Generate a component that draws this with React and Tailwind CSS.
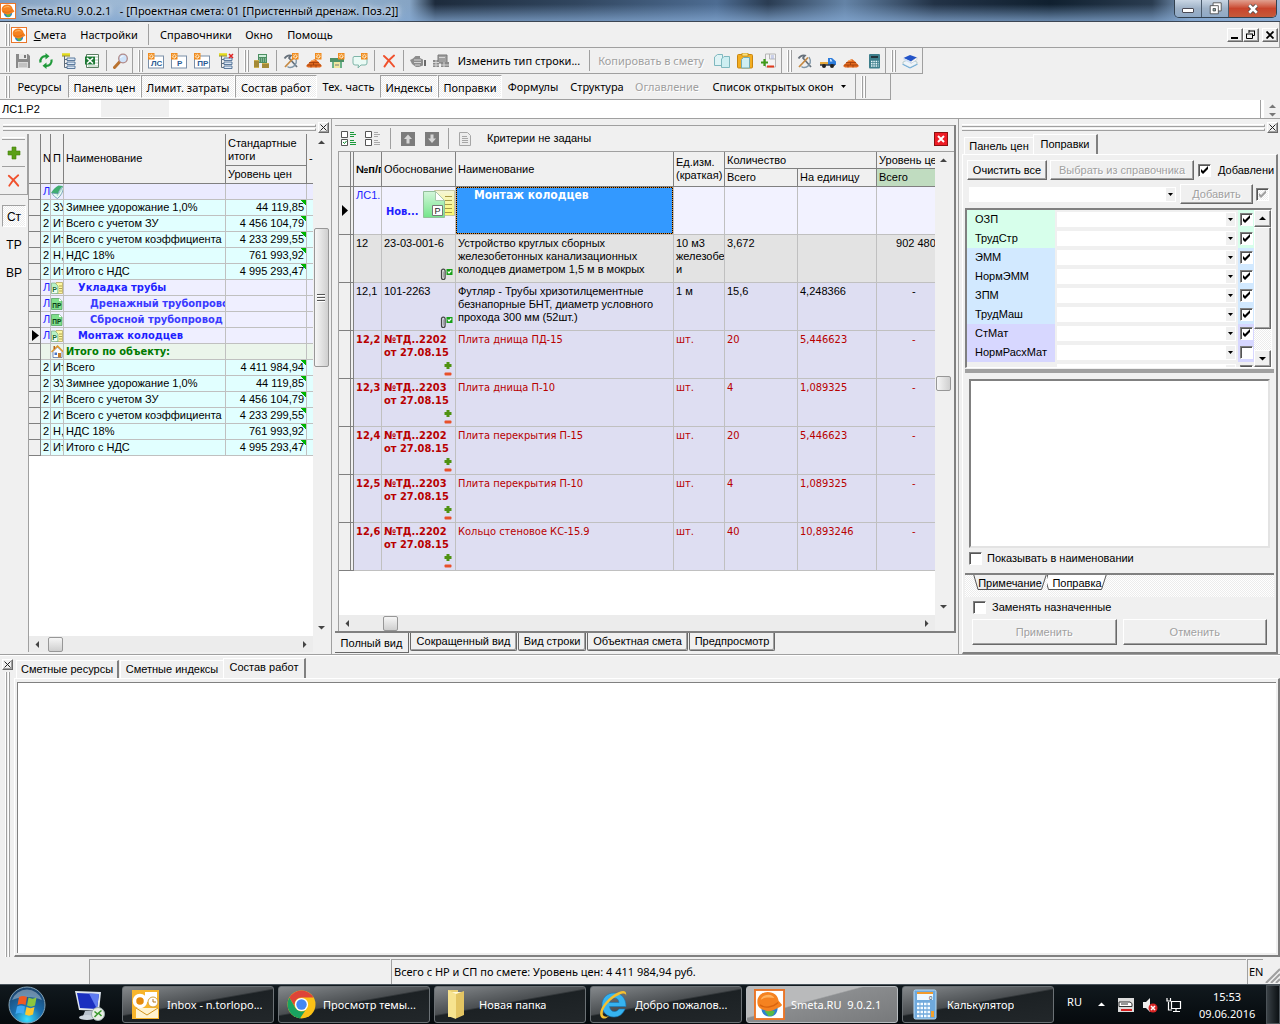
import React from "react";

const SANS = "font-['Liberation_Sans',Arial,sans-serif]";
const SEGOE = "font-['Noto_Sans','Open_Sans',sans-serif]";
const TAHOMA = "font-['DejaVu_Sans_Condensed','DejaVu_Sans',sans-serif]";

/* ---------- small drawings ---------- */

function Svg({ s = 16, vb = "0 0 16 16", className = "", children }) {
  return (
    <svg width={s} height={s} viewBox={vb} className={`shrink-0 ${className}`} fill="none" aria-hidden="true">
      {children}
    </svg>
  );
}

function Logo({ s = 16 }) {
  return (
    <Svg s={s}>
      <rect x=".5" y=".5" width="15" height="15" fill="#fff" stroke="#e9762a" />
      <path d="M3.800 9.500h8.400c0 3-1.700 4.700-4.200 4.700S3.800 12.500 3.800 9.500z" fill="#2b7fd0" />
      <path d="M5.500 11.500l2.500-.8 2.800.8-1 2.200-2.300.4z" fill="#57b947" />
      <path d="M1.800 7.500C1.300 4 3.800 1.600 7 1.500c3.500 0 5.300 2 5.700 4.500l1.800 2.300c-.8 1.200-2.300 1.500-3.500 2.200-1.500.8-3 1.300-4.800.7C4 10.700 2 9.700 1.800 7.500z" fill="#f58220" />
      <path d="M3.500 5.500c.6-1.700 2-2.500 4-2.500 1.500 0 2.500.7 3 1.700-2.300-.6-5-.5-7 .8z" fill="#ffb25e" />
      <path d="M3 8.200c2.500 1.800 6.500 1.500 9.500-1.200" stroke="#d9640f" strokeWidth=".7" />
    </Svg>
  );
}

function Gear({ x = 9, y = 0 }) {
  return (
    <g transform={`translate(${x} ${y})`}>
      <rect width="6.500" height="6.500" fill="#f08a1d" />
      <path d="M3.250 .8v5M.8 3.250h5M1.500 1.500l3.500 3.500M5 1.500L1.500 5" stroke="#fff3d6" strokeWidth=".9" />
      <circle cx="3.250" cy="3.250" r=".9" fill="#f08a1d" />
    </g>
  );
}

const Save = () => (
  <Svg>
    <path d="M1 1h12l2 2v12H1z" fill="#8a8a8a" />
    <path d="M4 1h8v5H4z" fill="#e8e8e8" />
    <path d="M9 2h2v3H9z" fill="#777" />
    <path d="M3 9h10v6H3z" fill="#d9d9d9" />
    <path d="M4 11h8M4 13h8" stroke="#aaa" />
  </Svg>
);
const Refresh = () => (
  <Svg>
    <path d="M2.500 9.500C1.800 5.500 4.500 3 8 3.200M13.500 6.500C14.200 10.500 11.500 13 8 12.800" stroke="#1f9a3a" strokeWidth="2.200" />
    <path d="M7.500 0v6.500l4-3.200zM8.500 16V9.500l-4 3.200z" fill="#1f9a3a" />
  </Svg>
);
const Tree = ({ x = false }) => (
  <Svg>
    <path d="M1 1.500h8" stroke="#e3db1b" strokeWidth="2.500" />
    <path d="M1 3h8" stroke="#8f8a1c" />
    <path d="M3.500 3v11.500M3.500 6.500H6M3.500 10.500H6M3.500 14.500H6" stroke="#5f6d7c" />
    <path d="M6 5h8v2.500H6zM6 9h8v2.500H6zM6 13h8v2.500H6z" fill="#dbe7f5" stroke="#4d6e94" strokeWidth=".9" />
    {x && <path d="M11 1l4 4M15 1l-4 4" stroke="#e02424" strokeWidth="1.500" />}
  </Svg>
);
const Excel = () => (
  <Svg>
    <path d="M2.500 1.500h12v13h-12z" fill="#fff" stroke="#5c7f63" />
    <path d="M11 4h3M11 7h3M11 10h3M4 13h10" stroke="#a9c7b0" />
    <path d="M1 3.500h10v8H1z" fill="#1d7a35" />
    <path d="M3 5l6 5.500M9 5l-6 5.500" stroke="#fff" strokeWidth="1.600" />
  </Svg>
);
const Magnifier = () => (
  <Svg>
    <path d="M1.500 14.500l5-5.500" stroke="#b9722f" strokeWidth="3" strokeLinecap="round" />
    <circle cx="10" cy="5.500" r="4.300" fill="#cfe3fa" stroke="#b08a8a" strokeWidth="1.300" />
    <path d="M7.500 5c.5-1.500 1.800-2 3-2" stroke="#fff" />
  </Svg>
);
const DocTag = ({ t }) => (
  <Svg>
    <rect x=".5" y="3" width="15" height="12" fill="#fff" stroke="#7b8fa8" />
    <text x="8.700" y="13.300" textAnchor="middle" fontSize="8" fontWeight="bold" fontFamily="Liberation Sans" fill="#2b5c94">
      {t}
    </text>
    <Gear x={0} y={0} />
  </Svg>
);
const Estimate = () => (
  <Svg>
    <path d="M4 1h9v9H4z" fill="#4d8f62" />
    <path d="M5 2h7v2H5z" fill="#cdeeda" />
    <path d="M5 6h7M5 8h7" stroke="#b7dcc4" strokeDasharray="1 1" />
    <path d="M0 7h5v8H0zM8 10h7v5H8z" fill="#cdb04e" />
    <path d="M0 9h5M0 11h5M0 13h5M8 12h7M8 14h7" stroke="#7c6520" />
  </Svg>
);
const Hammer = ({ gear }) => (
  <Svg>
    <path d="M1.500 5.500C3 3 5 2 8 2.500L6 5l8 9" stroke="#66707a" strokeWidth="1.700" />
    <path d="M12 4c2.500 4 1.500 8-2.500 10-2 .7-4 .3-5-.6" stroke="#7f96a8" strokeWidth="1.400" />
    <path d="M2 14L11 4.500" stroke="#c58a44" strokeWidth="1.800" />
    {gear && <Gear />}
  </Svg>
);
const Bricks = ({ gear }) => (
  <Svg>
    <path d="M0 13l2.500-2.500 3-3L9 6l3 2.500 4 4.500-2 1.500H2z" fill="#e2691e" />
    <path d="M1 12h14M3 9.500h10M5 12v2.500M10 12v2.500M7.500 9.500V12" stroke="#9c3c0b" strokeWidth=".8" />
    <path d="M5 8l4-1" stroke="#ffb36b" />
    {gear && <Gear />}
  </Svg>
);
const Printer = () => (
  <Svg>
    <path d="M1 5h14v4H1z" fill="#4e9167" />
    <path d="M3 9h10v6H3z" fill="#6bb287" />
    <path d="M5 9h6v6H5z" fill="#efe7a0" />
    <path d="M6 12h4" stroke="#777" />
    <Gear />
  </Svg>
);
const Bubble = () => (
  <Svg>
    <path d="M2 3.500h11q2 0 2 2V10q0 2-2 2h-4l-3 3 .5-3H3q-2 0-2-2V5.500q0-2 1-2z" fill="#eafaf5" stroke="#7fb5a8" />
    <Gear />
  </Svg>
);
const RedX = ({ s = 16 }) => (
  <Svg s={s}>
    <path d="M3 3c3 2.500 7 6.500 10 10.500M13 2.500C9 5.500 6 9 3.500 13.500" stroke="#f0512d" strokeWidth="2" strokeLinecap="round" />
  </Svg>
);
const GreyEngine = () => (
  <Svg>
    <path d="M0 7l3-1.500L5.500 3H10v2l3 1.500v6l-4 1.500H6l-4-3z" fill="#8d8d8d" />
    <path d="M4 7h7M4 9.500h7M5 12h5" stroke="#d5d5d5" />
    <path d="M14 7h2v6h-2z" fill="#6b6b6b" />
  </Svg>
);
const GreyBlocks = () => (
  <Svg>
    <path d="M5 2h9v8H5z" fill="#a0a0a0" stroke="#787878" />
    <path d="M0 7h6v7H0zM8 9h8v5H8z" fill="#8a8a8a" />
    <path d="M0 9.500h6M0 12h6M8 12h8M6 4.500h6M3 7v7M11 9v5" stroke="#d6d6d6" />
  </Svg>
);
const Copy = () => (
  <Svg>
    <path d="M.5 4l3-2.500h5v11h-8z" fill="#dff3f5" stroke="#7fb8bf" />
    <path d="M7.500 6l2.500-2.500h5.500V14.500h-8z" fill="#cdeef1" stroke="#7fb8bf" />
  </Svg>
);
const Paste = () => (
  <Svg>
    <rect x=".5" y="1.500" width="15" height="13.500" rx="1" fill="#f4ae22" stroke="#c98610" />
    <path d="M5 0h6v3H5z" fill="#ffe27d" stroke="#b58a1a" strokeWidth=".7" />
    <path d="M4.500 6.500l2-2h6V15h-8z" fill="#cfeef1" stroke="#71aab3" />
  </Svg>
);
const AddSub = () => (
  <Svg>
    <path d="M4.500 1h10v13h-10zM8.500 1v5h6" fill="#f4f4f4" stroke="#b5b5b5" />
    <path d="M10 3h3M10 5h3" stroke="#a5b0e0" />
    <path d="M3.500 6v7M0 9.500h7" stroke="#3f9a1b" strokeWidth="2.200" />
    <path d="M6 13.500h7" stroke="#e23a1c" strokeWidth="2" />
  </Svg>
);
const Truck = () => (
  <Svg>
    <path d="M0 9h9v3H0z" fill="#e7a93b" />
    <path d="M8 5h4l4 3.500V12H8z" fill="#2d7ddd" />
    <path d="M11 6l1.500 2.500H10V6z" fill="#cbe4ff" />
    <path d="M0 12h15" stroke="#2c3c55" strokeWidth="1.500" />
    <circle cx="4" cy="13" r="2" fill="#222" />
    <circle cx="12" cy="13" r="2" fill="#222" />
  </Svg>
);
const Calc = () => (
  <Svg>
    <rect x="3" y="1" width="11" height="14.500" rx="1" fill="#3e7f8c" />
    <path d="M5 3h7v2H5z" fill="#22343c" />
    <path d="M5 8.500h7.500M5 10.800h7.500M5 13h7.500" stroke="#e8f8fb" strokeWidth="1.400" strokeDasharray="1.500 .8" />
  </Svg>
);
const Book = () => (
  <Svg>
    <path d="M0 11.500l8-3 8 3-8 4z" fill="#5ca7e8" />
    <path d="M1 9l7-3 7 3v2l-7 3.500-7-3.500z" fill="#eef4fa" stroke="#8aa" strokeWidth=".5" />
    <path d="M1.500 5L8 2l7 2.500L9 8.500z" fill="#2454c8" />
    <path d="M1.500 5v2L9 10.500v-2z" fill="#cfe0f5" />
    <path d="M9 8.500l6-4v2l-6 4z" fill="#fff" stroke="#9ab" strokeWidth=".4" />
  </Svg>
);
const Plus = ({ s = 14 }) => (
  <Svg s={s} vb="0 0 14 14">
    <path d="M5 1h4v4h4v4H9v4H5V9H1V5h4z" fill="#5b9f17" stroke="#43820c" strokeWidth=".6" />
  </Svg>
);
const PlusMinus = () => (
  <svg width="8" height="16" viewBox="0 0 8 16" aria-hidden="true">
    <path d="M2.500 1h3v2h2v3h-2v2h-3V6h-2V3h2z" fill="#4f9212" />
    <rect x=".5" y="11.500" width="7" height="3" rx="1" fill="#e8502a" />
  </svg>
);
const Clip = () => (
  <svg width="13" height="14" viewBox="0 0 13 14" aria-hidden="true" fill="none">
    <path d="M1.500 3v7.500q0 2 1.800 2t1.800-2V4q0-1.800-1.800-1.800T1.500 4" stroke="#444" strokeWidth="1.200" />
    <path d="M3.300 4.500v6" stroke="#999" />
    <path d="M6.500 2h6v6h-6z" fill="#17a017" />
    <path d="M7.800 4.500L9 6l2.300-2.500" stroke="#fff" strokeWidth="1.200" />
  </svg>
);
const SmallR = () => (
  <Svg s={12} vb="0 0 12 12">
    <path d="M5 .5h6.500v11H5z" fill="#fdf7a2" stroke="#b8a860" strokeWidth=".8" />
    <path d="M8 4h3M8 6.500h3M8 9h3" stroke="#9c8d3e" strokeWidth=".8" />
    <path d="M.5 1H4l3 3v7.500H.5z" fill="#b9f2c5" stroke="#7daa84" strokeWidth=".7" />
    <path d="M1 5h5v6H1z" fill="#eefdf1" />
    <text x="3.500" y="10.300" fontSize="7" fontWeight="bold" textAnchor="middle" fontFamily="Liberation Sans" fill="#17662b">P</text>
  </Svg>
);
const SmallPR = () => (
  <Svg s={12} vb="0 0 12 12">
    <path d="M.5 .5H8L11 3v8.500H.5z" fill="#7fe08b" stroke="#4a9a58" strokeWidth=".7" />
    <path d="M8 .5V3h3z" fill="#fff" />
    <text x="5.800" y="9.800" fontSize="6.500" fontWeight="bold" textAnchor="middle" fontFamily="Liberation Sans" fill="#0b3d16">ПР</text>
  </Svg>
);
const House = () => (
  <Svg s={13} vb="0 0 13 13">
    <path d="M2 6.500L6.500 2 11 6.500V12.500H2z" fill="#fff" stroke="#5a72a8" strokeWidth=".8" />
    <path d="M.5 7L6.500 1l6 6" stroke="#e39a2d" strokeWidth="1.500" />
    <path d="M7 8h3v4.500H7z" fill="#c77d2a" />
    <path d="M3.500 7.500H6v2.500H3.500z" fill="#4a76c8" />
    <path d="M2.500 1h1.500v3H2.500z" fill="#b5651d" />
  </Svg>
);
const Sheet = () => (
  <svg width="13" height="14" viewBox="0 0 13 14" fill="none" aria-hidden="true">
    <path d="M0 8C2 5 4 2 7.500 .5L12.500 1C9 3 8 6 7 9z" fill="#3fae70" />
    <path d="M1 8l6 1c1-3 3-6 5.500-7.500C12.500 6 10 11 6.500 13.500 4.500 12.500 2 10.500 1 8z" fill="#e9fbf2" stroke="#5f93a8" strokeWidth=".8" />
    <path d="M6 11l5-7" stroke="#9cc" strokeWidth=".8" />
  </svg>
);
const BigR = () => (
  <svg width="32" height="30" viewBox="0 0 32 30" aria-hidden="true" fill="none">
    <defs>
      <linearGradient id="bigGreen" x1="0" y1="0" x2="0" y2="1">
        <stop offset="0" stopColor="#d3f6da" />
        <stop offset="1" stopColor="#74e58b" />
      </linearGradient>
      <linearGradient id="bigYellow" x1="0" y1="0" x2="0" y2="1">
        <stop offset="0" stopColor="#f4f6d8" />
        <stop offset="1" stopColor="#fbf76b" />
      </linearGradient>
    </defs>
    <path d="M11.500 1.500h20v25h-20z" fill="url(#bigYellow)" stroke="#c9c9a0" />
    <path d="M22 7.500h7M22 11.500h7M22 15.500h7M22 19.500h7M22 23.500h7" stroke="#a89a45" />
    <path d="M.5 2.500h12l9 9V28.500H.5z" fill="url(#bigGreen)" stroke="#93bf9b" />
    <path d="M12.500 2.500v9h9z" fill="#fff" stroke="#a9c9ad" />
    <path d="M9.500 16.500h10v10h-10z" fill="#fff" stroke="#777" />
    <text x="14.500" y="25" fontSize="9" textAnchor="middle" fontFamily="Liberation Sans" fill="#222">P</text>
  </svg>
);
const CheckList = ({ on }) => (
  <Svg>
    <path d="M.5 .5h6v6h-6zM.5 8.500h6v6h-6z" fill="#fff" stroke="#555" />
    {on && <path d="M2 11l1.500 1.500 2-2.500" stroke="#0a8a2a" />}
    <path d="M9 1.500h4M9 3.500h6M9 5.500h4M9 9.500h4M9 11.500h6M9 13.500h6" stroke={on ? "#1a9a3a" : "#aaa"} />
  </Svg>
);
const ArrowBox = ({ down }) => (
  <Svg>
    <rect x="1" y="1" width="14" height="14" fill="#7c7c7c" />
    <path d={down ? "M6.500 3.500h3v4H12L8 12 4 7.500h2.500z" : "M8 3.500L12 8H9.500v4.500h-3V8H4z"} fill="#d6d6d6" />
  </Svg>
);
const GreyDoc = () => (
  <Svg>
    <path d="M2.500 1.500h8l3 3v10h-11z" fill="#ececec" stroke="#a6a6a6" />
    <path d="M5 5.500h5M5 7.500h6M5 9.500h6M5 11.500h6" stroke="#a6a6a6" />
  </Svg>
);
const Tri = ({ d = "down", c = "#444" }) => (
  <svg width="7" height="7" viewBox="0 0 7 7" className="shrink-0" aria-hidden="true">
    <path
      d={{ up: "M0 5h7L3.500 1.500z", down: "M0 2h7L3.500 5.500z", left: "M5 0v7L1.500 3.500z", right: "M2 0v7l3.500-3.500z" }[d]}
      fill={c}
    />
  </svg>
);

/* ---------- controls ---------- */

const RAISED = "border border-t-white border-l-white border-r-[#696969] border-b-[#696969] shadow-[inset_-1px_-1px_0_#a0a0a0]";
const DITHER = "bg-[repeating-conic-gradient(#ffffff_0_25%,#ececec_0_50%)] bg-[length:2px_2px]";

const Grip = () => (
  <span className="mr-px flex h-[22px] w-[5px] shrink-0 self-center gap-px">
    <span className="w-[2px] border-r border-r-[#a0a0a0] border-l border-l-white" />
    <span className="w-[2px] border-r border-r-[#a0a0a0] border-l border-l-white" />
  </span>
);
const Sep = () => <span className="mr-[2px] ml-[3px] h-[21px] w-px shrink-0 self-center bg-[#a0a0a0]" />;
const IconBtn = ({ label, children, w = "w-[23px]" }) => (
  <button aria-label={label} className={`flex h-full ${w} shrink-0 items-center justify-center`}>
    {children}
  </button>
);
const BarGroup = ({ children }) => (
  <div className="flex h-full shrink-0 items-center border-r border-b border-[#a0a0a0] pl-[5px]">{children}</div>
);
const TextBtn = ({ w, on, off, children }) => (
  <button
    disabled={off}
    className={`flex h-[23px] shrink-0 items-center justify-center whitespace-nowrap ${w} ${
      on ? `border border-t-[#a0a0a0] border-r-white border-b-white border-l-[#a0a0a0] pt-px ${DITHER}` : ""
    } ${off ? "text-[#a0a0a0] [text-shadow:1px_1px_0_#fff]" : ""}`}
  >
    {children}
  </button>
);

function CloseX({ label }) {
  return (
    <button aria-label={label} className={`flex size-[11px] shrink-0 items-center justify-center ${RAISED}`}>
      <svg width="7" height="7" viewBox="0 0 7 7" aria-hidden="true">
        <path d="M.5 .5l6 6M6.500 .5l-6 6" stroke="#222" />
      </svg>
    </button>
  );
}

function Tick({ id, on, off, label }) {
  return (
    <span className="relative inline-flex size-[13px] shrink-0">
      <input
        id={id}
        type="checkbox"
        aria-label={label}
        defaultChecked={on}
        disabled={off}
        className={`peer size-[13px] appearance-none border border-t-[#808080] border-r-white border-b-white border-l-[#808080] shadow-[inset_1px_1px_0_#555] ${
          off ? DITHER : "bg-white"
        }`}
      />
      <svg width="13" height="13" viewBox="0 0 13 13" className="pointer-events-none absolute inset-0 hidden peer-checked:block" aria-hidden="true">
        <path d="M3 5v3l2 2 5-5V2L5 7z" fill={off ? "#a0a0a0" : "#000"} />
      </svg>
    </span>
  );
}

function PushBtn({ off, className = "", children }) {
  return (
    <button
      disabled={off}
      className={`flex items-center justify-center whitespace-nowrap ${RAISED} ${off ? "text-[#a0a0a0] [text-shadow:1px_1px_0_#fff]" : ""} ${className}`}
    >
      {children}
    </button>
  );
}

function Combo({ label, className = "" }) {
  return (
    <span className={`relative flex bg-white ${className}`}>
      <select aria-label={label} className="w-full appearance-none bg-transparent outline-none" />
      <span className="pointer-events-none absolute top-px right-px bottom-px flex w-[9px] items-center justify-center bg-[#f0f0f0]">
        <svg width="5" height="3" viewBox="0 0 5 3" aria-hidden="true">
          <path d="M0 0h5L2.500 3z" fill="#000" />
        </svg>
      </span>
    </span>
  );
}

/* Vertical scroll track; the thumb is placed by the share of the track above and below it. */
function VScroll({ before, thumb, after, grip }) {
  return (
    <div className="flex w-[16px] shrink-0 flex-col items-center bg-[#f0f0f0]">
      <span className="flex h-[17px] items-center"><Tri d="up" /></span>
      <span style={{ flexGrow: before }} />
      <span
        style={{ height: thumb }}
        className="flex w-[15px] flex-col items-center justify-center gap-px rounded-[2px] border border-[#979797] bg-linear-to-r from-[#f6f6f6] to-[#cfcfcf]"
      >
        {grip && [0, 1, 2].map((i) => <span key={i} className="h-[2px] w-[8px] border-t border-[#555] bg-white" />)}
      </span>
      <span style={{ flexGrow: after }} />
      <span className="flex h-[17px] items-center"><Tri /></span>
    </div>
  );
}
function HScroll({ gap }) {
  return (
    <div className="flex h-[16px] shrink-0 items-center bg-[#ececec]">
      <span className="flex w-[17px] justify-center"><Tri d="left" /></span>
      <span className={gap} />
      <span className="h-[15px] w-[15px] rounded-[2px] border border-[#979797] bg-linear-to-b from-[#f6f6f6] to-[#cfcfcf]" />
      <span className="flex-1" />
      <span className="flex w-[17px] justify-center"><Tri d="right" /></span>
    </div>
  );
}

/* ---------- window chrome ---------- */

function TitleBar() {
  return (
    <header
      className={`flex h-[22px] shrink-0 items-center border-b border-[#3c4654] bg-[linear-gradient(to_bottom,transparent_20%,rgba(132,168,210,.75)),linear-gradient(to_right,#7f9cbd,#9db8d4_8%,#8eacc9_28%,#86a4c4_32%,#1d2b3c_34%,#31465f_45%,#4d6c92_56%,#2a3c52_60%,#6483a6_66%,#223246_73%,#10202f_82%,#2a3c50_90%,#86a5c9_93%,#9bb9da)] ${SEGOE} text-[11px] text-black`}
    >
      <Logo />
      <span className="ml-[5px] whitespace-pre [text-shadow:0_0_5px_#fff,0_0_8px_#fff]">
        {"Smeta.RU  9.0.2.1   - [Проектная смета: 01 [Пристенный дренаж. Поз.2]]"}
      </span>
      <div className="mr-[3px] ml-auto flex h-[18px] self-start overflow-hidden rounded-b-[5px] border border-t-0 border-[#33414f]">
        <button aria-label="Свернуть" className="flex w-[27px] items-center justify-center border-r border-[#4a5a6b] bg-linear-to-b from-[#c9d6e4] via-[#9eb1c6] to-[#8fa9c6]">
          <span className="mt-[3px] h-[5px] w-[12px] rounded-[1px] border border-[#4a4a55] bg-white" />
        </button>
        <button aria-label="Восстановить" className="flex w-[27px] items-center justify-center border-r border-[#4a5a6b] bg-linear-to-b from-[#c9d6e4] via-[#9eb1c6] to-[#8fa9c6]">
          <Svg s={13}>
            <path d="M5 1h10v10H5z" fill="#fff" stroke="#444" />
            <path d="M1.500 4.500h10v10h-10z" fill="#fff" stroke="#444" />
            <path d="M5 8h3v3H5z" fill="#8aa" stroke="#444" />
          </Svg>
        </button>
        <button aria-label="Закрыть" className="flex w-[47px] items-center justify-center bg-linear-to-b from-[#e0a090] via-[#c8442c] to-[#c65a3a]">
          <Svg s={12}>
            <path d="M3 3l10 10M13 3L3 13" stroke="#444" strokeWidth="5.500" />
            <path d="M3 3l10 10M13 3L3 13" stroke="#fff" strokeWidth="3.500" />
          </Svg>
        </button>
      </div>
    </header>
  );
}

function MenuBar() {
  return (
    <nav className={`flex h-[26px] shrink-0 items-center border-r border-b border-[#a0a0a0] pl-[5px] ${SEGOE} text-[11px]`}>
      <Grip />
      <Logo />
      <button className="w-[46px] text-center"><u>С</u>мета</button>
      <button className="w-[72px] text-center">Настройки</button>
      <Sep />
      <button className="w-[90px] text-center">Справочники</button>
      <button className="w-[36px] text-center">Окно</button>
      <button className="w-[66px] text-center">Помощь</button>
      <div className="mr-[1px] ml-auto flex">
        <button aria-label="Свернуть документ" className={`flex h-[14px] w-[16px] items-end pb-[2px] pl-[3px] ${RAISED}`}>
          <span className="h-[2px] w-[7px] bg-black" />
        </button>
        <button aria-label="Восстановить документ" className={`flex h-[14px] w-[16px] items-center justify-center ${RAISED}`}>
          <svg width="10" height="9" viewBox="0 0 10 9" fill="none" aria-hidden="true">
            <path d="M3 1h6M3 0v3M8.500 1v4.500H7M.500 4v4.500h6V4M0 4h7" stroke="#000" />
          </svg>
        </button>
        <button aria-label="Закрыть документ" className={`ml-[3px] flex h-[14px] w-[16px] items-center justify-center ${RAISED}`}>
          <svg width="8" height="8" viewBox="0 0 8 8" aria-hidden="true">
            <path d="M.5 .5l7 7M7.500 .5l-7 7" stroke="#000" strokeWidth="1.800" />
          </svg>
        </button>
      </div>
    </nav>
  );
}

function IconToolbar() {
  return (
    <div className={`flex h-[26px] shrink-0 ${SEGOE} text-[11px]`}>
      <BarGroup>
        <Grip />
        <IconBtn label="Сохранить"><Save /></IconBtn>
        <IconBtn label="Обновить"><Refresh /></IconBtn>
        <IconBtn label="Дерево"><Tree /></IconBtn>
        <IconBtn label="Excel"><Excel /></IconBtn>
        <Sep />
        <IconBtn label="Поиск"><Magnifier /></IconBtn>
      </BarGroup>
      <BarGroup>
        <Grip />
        <IconBtn label="Новая локальная смета"><DocTag t="ЛС" /></IconBtn>
        <IconBtn label="Новый раздел"><DocTag t="Р" /></IconBtn>
        <IconBtn label="Новый подраздел"><DocTag t="ПР" /></IconBtn>
        <IconBtn label="Удалить узел" w="w-[25px]"><Tree x /></IconBtn>
      </BarGroup>
      <BarGroup>
        <Grip />
        <IconBtn label="Расчёт"><Estimate /></IconBtn>
        <Sep />
        <IconBtn label="Новая расценка"><Hammer gear /></IconBtn>
        <IconBtn label="Новый материал"><Bricks gear /></IconBtn>
        <IconBtn label="Новое оборудование"><Printer /></IconBtn>
        <IconBtn label="Комментарий"><Bubble /></IconBtn>
        <Sep />
        <IconBtn label="Удалить"><RedX /></IconBtn>
        <Sep />
        <IconBtn label="Машина"><GreyEngine /></IconBtn>
        <IconBtn label="Оборудование"><GreyBlocks /></IconBtn>
        <TextBtn w="w-[134px]">Изменить тип строки...</TextBtn>
        <Sep />
        <TextBtn w="w-[118px]" off>Копировать в смету</TextBtn>
        <IconBtn label="Копировать"><Copy /></IconBtn>
        <IconBtn label="Вставить"><Paste /></IconBtn>
        <IconBtn label="Добавить или убрать" w="w-[25px]"><AddSub /></IconBtn>
      </BarGroup>
      <BarGroup>
        <Grip />
        <IconBtn label="Работы"><Hammer /></IconBtn>
        <IconBtn label="Перевозка"><Truck /></IconBtn>
        <IconBtn label="Материалы"><Bricks /></IconBtn>
        <IconBtn label="Калькулятор"><Calc /></IconBtn>
      </BarGroup>
      <BarGroup>
        <Grip />
        <IconBtn label="Книги" w="w-[25px]"><Book /></IconBtn>
      </BarGroup>
    </div>
  );
}

function TextToolbar() {
  return (
    <div className={`flex h-[26px] shrink-0 ${SEGOE} text-[11px]`}>
      <BarGroup>
        <Grip />
        <TextBtn w="w-[57px]">Ресурсы</TextBtn>
        <TextBtn w="w-[73px]" on>Панель цен</TextBtn>
        <TextBtn w="w-[94px]" on>Лимит. затраты</TextBtn>
        <TextBtn w="w-[82px]" on>Состав работ</TextBtn>
        <TextBtn w="w-[63px]">Тех. часть</TextBtn>
        <TextBtn w="w-[58px]" on>Индексы</TextBtn>
        <TextBtn w="w-[64px]" on>Поправки</TextBtn>
        <TextBtn w="w-[62px]">Формулы</TextBtn>
        <TextBtn w="w-[66px]">Структура</TextBtn>
        <TextBtn w="w-[74px]" off>Оглавление</TextBtn>
        <TextBtn w="w-[151px]">
          <span className="mr-[8px]">Список открытых окон</span>
          <svg width="5" height="3" viewBox="0 0 5 3" aria-hidden="true"><path d="M0 0h5L2.500 3z" fill="#000" /></svg>
        </TextBtn>
      </BarGroup>
      <BarGroup>
        <Grip />
        <span className="w-[23px]" />
      </BarGroup>
    </div>
  );
}

/* ---------- left panel ---------- */

const totals = [
  ["ЗУ", "Зимнее удорожание 1,0%", "44 119,85"],
  ["Ит", "Всего с учетом ЗУ", "4 456 104,79"],
  ["Ит", "Всего с учетом коэффициента", "4 233 299,55"],
  ["Н,", "НДС 18%", "761 993,92"],
  ["Ит", "Итого с НДС", "4 995 293,47"],
];
const treeRows = [
  { k: "top", icon: <Sheet /> },
  ...totals.map((t) => ({ k: "sum", t })),
  { k: "node", icon: <SmallR />, name: "Укладка трубы", pad: "pl-[14px]", c: "text-[#1f1fff]" },
  { k: "node", icon: <SmallPR />, name: "Дренажный трубопровод", pad: "pl-[26px]", c: "text-[#3a3aff]" },
  { k: "node", icon: <SmallPR />, name: "Сбросной трубопровод", pad: "pl-[26px]", c: "text-[#3a3aff]" },
  { k: "node", icon: <SmallR />, name: "Монтаж колодцев", pad: "pl-[14px]", c: "text-[#1f1fff]", cur: true },
  { k: "obj", icon: <House />, name: "Итого по объекту:", pad: "pl-[2px]", c: "text-[#007a00]" },
  { k: "sum", t: ["Ит", "Всего", "4 411 984,94"] },
  ...totals.map((t) => ({ k: "sum", t })),
];
const ROW_BG = { top: "bg-[#ebebff]", sum: "bg-[#e1ffff]", node: "bg-[#efefff]", obj: "bg-[#ebf5eb]" };

const TH = "border-r border-b border-[#808080] p-0 pl-[2px] text-left align-middle overflow-hidden";

function TreeTable() {
  const th = `${TH} bg-[#f0f0f0] font-normal whitespace-nowrap`;
  const td = "h-[16px] border-r border-b p-0 overflow-hidden whitespace-nowrap leading-[15px]";
  const line = "border-[#c0c0c0]";
  return (
    <table className="w-full table-fixed border-separate border-spacing-0">
      <colgroup>
        <col className="w-[12px]" />
        <col className="w-[10px]" />
        <col className="w-[13px]" />
        <col className="w-[162px]" />
        <col className="w-[81px]" />
        <col />
      </colgroup>
      <thead>
        <tr className="h-[32px]">
          <th rowSpan={2} className={th} />
          <th rowSpan={2} className={th}>N</th>
          <th rowSpan={2} className={th}>П</th>
          <th rowSpan={2} className={th}>Наименование</th>
          <th className={`${TH} bg-[#f0f0f0] leading-[13px] font-normal`}>Стандартные итоги</th>
          <th rowSpan={2} className={`${th} border-r-0`}>-</th>
        </tr>
        <tr className="h-[18px]">
          <th className={th}>Уровень цен</th>
        </tr>
      </thead>
      <tbody>
        {treeRows.map((r, i) => (
          <tr key={i} className={ROW_BG[r.k]}>
            <td className={`${td} border-[#808080] bg-[#f0f0f0] pl-[2px]`}>
              {r.cur && (
                <svg width="7" height="11" viewBox="0 0 7 11" className="ml-[1px]" aria-hidden="true"><path d="M0 0v11l7-5.500z" fill="#000" /></svg>
              )}
            </td>
            <td className={`${td} ${line} pl-[2px] ${r.k === "sum" ? "" : "text-[#1f1fff]"}`}>{r.k === "sum" ? "2" : r.k === "obj" ? "" : "Л"}</td>
            <td className={`${td} ${line} ${r.icon ? "" : "pl-[2px]"}`}>{r.icon || r.t[0]}</td>
            {r.name ? (
              <td className={`${td} ${line} font-bold ${TAHOMA} ${r.pad} ${r.c}`}>{r.name}</td>
            ) : (
              <td className={`${td} ${line} pl-[2px]`}>{r.t ? r.t[1] : ""}</td>
            )}
            <td className={`${td} ${line} pr-[2px] text-right ${r.t ? "bg-[linear-gradient(225deg,#00b400_4px,transparent_4px)]" : ""}`}>
              {r.t ? r.t[2] : ""}
            </td>
            <td className={`${td} ${line} border-r-0`} />
          </tr>
        ))}
      </tbody>
    </table>
  );
}

function HGrip() {
  return (
    <span className="flex h-[8px] flex-1 flex-col gap-[1px]">
      <span className="h-[3px] border-t border-r border-b border-[#a0a0a0] border-t-white" />
      <span className="h-[3px] border-t border-r border-b border-[#a0a0a0] border-t-white" />
    </span>
  );
}

function LeftPanel() {
  return (
    <section className="flex w-[332px] shrink-0 flex-col border-r border-[#a0a0a0]">
      <div className="flex h-[15px] shrink-0 items-center gap-[2px] pt-[2px] pr-[2px] pl-[3px]">
        <HGrip />
        <CloseX label="Закрыть панель итогов" />
      </div>
      <div className="flex min-h-0 flex-1">
        <div className="flex w-[28px] shrink-0 flex-col items-center text-[12px]">
          <div className="flex w-full flex-col border-r border-b border-[#a0a0a0] px-[2px]">
            <span className="mt-[3px] h-[3px] border-t border-b border-t-white border-b-[#a0a0a0]" />
            <button aria-label="Добавить строку" className="flex h-[26px] items-center justify-center"><Plus /></button>
            <span className="h-px bg-[#a0a0a0]" />
            <button aria-label="Удалить строку" className="flex h-[27px] items-center justify-center"><RedX s={15} /></button>
          </div>
          <button className={`mt-[10px] h-[22px] w-[24px] border border-t-[#a0a0a0] border-r-white border-b-white border-l-[#a0a0a0] pt-[2px] ${DITHER}`}>Ст</button>
          <button className="mt-[6px] h-[24px]">ТР</button>
          <button className="mt-[4px] h-[24px]">ВР</button>
        </div>
        <div className="mb-[2px] flex min-w-0 flex-1 border-l border-[#a0a0a0]">
          <div className="flex w-[284px] flex-col bg-white">
            <div className="min-h-0 flex-1 overflow-hidden"><TreeTable /></div>
            <HScroll gap="w-[2px]" />
          </div>
          <div className="flex flex-1 pb-[16px]">
            <VScroll before={77} thumb={139} after={252} grip />
          </div>
        </div>
      </div>
    </section>
  );
}

/* ---------- centre panel ---------- */

const plates = [
  ["12,2", "2202", "Плита днища ПД-15", "20", "5,446623"],
  ["12,3", "2203", "Плита днища П-10", "4", "1,089325"],
  ["12,4", "2202", "Плита перекрытия П-15", "20", "5,446623"],
  ["12,5", "2203", "Плита перекрытия П-10", "4", "1,089325"],
  ["12,6", "2202", "Кольцо стеновое КС-15.9", "40", "10,893246"],
];

function EstimateTable() {
  const th = `${TH} bg-[#f0f0f0] font-normal whitespace-nowrap`;
  const base = "h-[48px] border-b border-[#c0c0c0] p-0 pt-[2px] overflow-hidden align-top whitespace-nowrap";
  const td = `${base} border-r pl-[2px]`;
  const edge = "border-r border-b border-[#808080] bg-[#f0f0f0] p-0";
  return (
    <table className="w-full table-fixed border-separate border-spacing-0 leading-[13px]">
      <colgroup>
        <col className="w-[12px]" />
        <col className="w-[3px]" />
        <col className="w-[28px]" />
        <col className="w-[74px]" />
        <col className="w-[218px]" />
        <col className="w-[51px]" />
        <col className="w-[73px]" />
        <col className="w-[79px]" />
        <col />
      </colgroup>
      <thead>
        <tr className="h-[17px]">
          <th rowSpan={2} className={edge} />
          <th rowSpan={2} className={edge} />
          <th rowSpan={2} className={`${TH} bg-[#f0f0f0] font-bold whitespace-nowrap`}>№п/п</th>
          <th rowSpan={2} className={th}>Обоснование</th>
          <th rowSpan={2} className={th}>Наименование</th>
          <th rowSpan={2} className={th}>Ед.изм.<br />(краткая)</th>
          <th colSpan={2} className={th}>Количество</th>
          <th className={`${th} border-r-0`}>Уровень цен</th>
        </tr>
        <tr className="h-[18px]">
          <th className={th}>Всего</th>
          <th className={th}>На единицу</th>
          <th className={`${TH} border-r-0 bg-[#c0dcc0] font-normal`}>Всего</th>
        </tr>
      </thead>
      <tbody>
        <tr className="bg-[#f2f2ff]">
          <td className={`${edge} align-middle`}>
            <svg width="6" height="11" viewBox="0 0 6 11" className="ml-[3px]" aria-hidden="true"><path d="M0 0v11l6-5.500z" fill="#000" /></svg>
          </td>
          <td className={edge} />
          <td className={`${td} text-[#1f1fff]`}>ЛС1.</td>
          <td className={td}>
            <div className="flex justify-between">
              <b className={`pt-[16px] pl-[2px] text-[#1f1fff] ${TAHOMA}`}>Нов...</b>
              <BigR />
            </div>
          </td>
          <td className="border-r border-b border-[#c0c0c0] bg-[repeating-conic-gradient(#000_0_25%,#e08a2c_0_50%)] bg-[length:2px_2px] p-px align-top">
            <div className={`h-[45px] bg-[#3399ff] pt-[1px] pl-[17px] text-[12px] font-bold text-white ${TAHOMA}`}>Монтаж колодцев</div>
          </td>
          <td className={td} />
          <td className={td} />
          <td className={td} />
          <td className={base} />
        </tr>
        <tr className="bg-[#e3e3e3]">
          <td className={edge} />
          <td className={edge} />
          <td className={td}>12</td>
          <td className={td}>
            23-03-001-6
            <div className="flex justify-end pt-[17px] pr-[2px]"><Clip /></div>
          </td>
          <td className={td}>
            Устройство круглых сборных<br />железобетонных канализационных<br />колодцев диаметром 1,5 м в мокрых
          </td>
          <td className={td}>10 м3<br />железобетона<br />и</td>
          <td className={td}>3,672</td>
          <td className={td} />
          <td className={`${base} pl-[19px]`}>902 480,</td>
        </tr>
        <tr className="bg-[#dedef2]">
          <td className={edge} />
          <td className={edge} />
          <td className={td}>12,1</td>
          <td className={td}>
            101-2263
            <div className="flex justify-end pt-[17px] pr-[2px]"><Clip /></div>
          </td>
          <td className={td}>
            Футляр - Трубы хризотилцементные<br />безнапорные БНТ, диаметр условного<br />прохода 300 мм (52шт.)
          </td>
          <td className={td}>1 м</td>
          <td className={td}>15,6</td>
          <td className={td}>4,248366</td>
          <td className={`${base} pl-[35px]`}>-</td>
        </tr>
        {plates.map(([n, code, name, qty, per]) => (
          <tr key={n} className={`bg-[#dedef2] text-[#b80000] ${TAHOMA}`}>
            <td className={edge} />
            <td className={edge} />
            <td className={`${td} font-bold`}>{n}</td>
            <td className={`${td} font-bold`}>
              №ТД..{code}<br />от 27.08.15
              <div className="flex justify-end pt-[2px] pr-[3px]"><PlusMinus /></div>
            </td>
            <td className={td}>{name}</td>
            <td className={td}>шт.</td>
            <td className={td}>{qty}</td>
            <td className={td}>{per}</td>
            <td className={`${base} pl-[35px]`}>-</td>
          </tr>
        ))}
      </tbody>
    </table>
  );
}

function CenterPanel() {
  const tab = "h-[18px] shrink-0 rounded-b-[2px] border border-t-0 border-[#696969] shadow-[inset_-1px_-1px_0_#a0a0a0] whitespace-nowrap";
  return (
    <section className="mr-[1px] ml-[3px] flex min-w-0 flex-1 flex-col pt-[6px]">
      <div className="flex min-h-0 flex-1 flex-col border-r-2 border-b-2 border-[#808080]">
        <div className="flex h-[26px] shrink-0 items-center border-t border-[#a0a0a0] pl-[6px]">
          <button aria-label="Выбрать всё"><CheckList on /></button>
          <button aria-label="Снять выбор" className="ml-[8px]"><CheckList /></button>
          <span className="mr-[9px] ml-[9px] h-[21px] w-px bg-[#a0a0a0]" />
          <button aria-label="Вверх"><ArrowBox /></button>
          <button aria-label="Вниз" className="ml-[8px]"><ArrowBox down /></button>
          <span className="mr-[8px] ml-[8px] h-[21px] w-px bg-[#a0a0a0]" />
          <button aria-label="Критерии"><GreyDoc /></button>
          <span className="ml-[14px]">Критерии не заданы</span>
          <button aria-label="Закрыть критерии" className="mr-[6px] ml-auto flex size-[14px] items-center justify-center border border-[#8c1010] bg-[#ee1c25]">
            <svg width="8" height="8" viewBox="0 0 8 8" aria-hidden="true"><path d="M1 1l6 6M7 1L1 7" stroke="#fff" strokeWidth="2" /></svg>
          </button>
        </div>
        <div className="ml-[3px] flex min-h-0 flex-1 border-t border-l border-[#a0a0a0]">
          <div className="flex min-w-0 flex-1 flex-col bg-white">
            <div className="min-h-0 flex-1 overflow-hidden"><EstimateTable /></div>
            <HScroll gap="w-[27px]" />
          </div>
          <div className="mr-[3px] flex pb-[16px]">
            <VScroll before={207} thumb={15} after={207} />
          </div>
        </div>
      </div>
      <div role="tablist" className="flex h-[21px] shrink-0 items-start gap-[1px]">
        <button role="tab" className="h-[20px] w-[74px] border-r border-b border-[#696969] pt-[2px] whitespace-nowrap">Полный вид</button>
        <button role="tab" className={`${tab} w-[107px]`}>Сокращенный вид</button>
        <button role="tab" className={`${tab} w-[68px]`}>Вид строки</button>
        <button role="tab" className={`${tab} w-[101px]`}>Объектная смета</button>
        <button role="tab" className={`${tab} w-[86px]`}>Предпросмотр</button>
      </div>
    </section>
  );
}

/* ---------- right panel ---------- */

const fixes = [
  ["ОЗП", "bg-[#d7ffeb]", true],
  ["ТрудСтр", "bg-[#d7ffeb]", true],
  ["ЭММ", "bg-[#d2e9ff]", true],
  ["НормЭММ", "bg-[#d2e9ff]", true],
  ["ЗПМ", "bg-[#d2e9ff]", true],
  ["ТрудМаш", "bg-[#d2e9ff]", true],
  ["СтМат", "bg-[#d7d7ff]", true],
  ["НормРасхМат", "bg-[#d7d7ff]", false],
  ["НР", "bg-[#f0f0f0]", true],
];

function RightPanel() {
  return (
    <section className="ml-[1px] flex w-[322px] shrink-0 flex-col border-l border-[#a0a0a0] pr-[2px] pl-[3px]">
      <div className="flex h-[15px] shrink-0 items-center gap-[2px] pt-[2px]">
        <HGrip />
        <CloseX label="Закрыть панель поправок" />
      </div>
      <div role="tablist" className="flex h-[20px] shrink-0 items-end">
        <button role="tab" className="ml-[2px] h-[17px] w-[69px] border-t border-l border-white whitespace-nowrap">Панель цен</button>
        <button role="tab" className="h-[20px] w-[65px] border-t border-r-2 border-l border-t-white border-r-[#808080] border-l-white pb-px whitespace-nowrap">Поправки</button>
      </div>
      <div className="flex min-h-0 flex-1 flex-col border-t border-r-2 border-b-2 border-l border-t-white border-r-[#808080] border-b-[#808080] border-l-white pr-[2px] pl-[2px]">
        <div className="mt-[5px] flex h-[20px] shrink-0 items-center overflow-hidden pl-[2px]">
          <PushBtn className="h-[20px] w-[80px] shrink-0">Очистить все</PushBtn>
          <PushBtn off className="ml-[3px] h-[20px] w-[144px] shrink-0">Выбрать из справочника</PushBtn>
          <label className="ml-[4px] flex items-center gap-[7px] whitespace-nowrap"><Tick id="append" on />Добавление</label>
        </div>
        <div className="mt-[4px] flex h-[20px] shrink-0 items-center pl-[4px]">
          <Combo label="Поправка" className="h-[15px] w-[207px]" />
          <PushBtn off className="ml-[4px] h-[20px] w-[73px]">Добавить</PushBtn>
          <span className="ml-[3px] flex"><Tick id="addflag" on off label="Автоматически" /></span>
        </div>
        <div className="mt-[4px] mr-[2px] flex h-[160px] shrink-0 border border-t-2 border-l-2 border-t-[#808080] border-r-white border-b-white border-l-[#808080]">
          <div className="min-w-0 flex-1 overflow-hidden">
            {fixes.map(([name, bg, on]) => (
              <div key={name} className="flex h-[19px] items-center">
                <label htmlFor={`fix-${name}`} className={`flex h-full w-[88px] shrink-0 items-center pl-[8px] ${bg}`}>{name}</label>
                <Combo label={name} className="ml-[2px] h-[15px] min-w-0 flex-1" />
                <span className={`ml-[2px] flex h-full w-[16px] items-center justify-center ${bg}`}>
                  <Tick id={`fix-${name}`} on={on} />
                </span>
              </div>
            ))}
          </div>
          <div className={`flex w-[17px] shrink-0 flex-col ${DITHER}`}>
            <button aria-label="Прокрутить вверх" className={`flex h-[17px] items-center justify-center bg-[#f0f0f0] ${RAISED}`}><Tri d="up" c="#000" /></button>
            <span className={`h-[102px] bg-[#f0f0f0] ${RAISED}`} />
            <span className="flex-1" />
            <button aria-label="Прокрутить вниз" className={`flex h-[17px] items-center justify-center bg-[#f0f0f0] ${RAISED}`}><Tri c="#000" /></button>
          </div>
        </div>
        <div className="mt-[1px] h-[4px] shrink-0 bg-[#a0a0a0]" />
        <textarea
          aria-label="Примечание"
          className="mx-[4px] mt-[6px] min-h-0 flex-1 resize-none border-2 border-t-[#808080] border-r-[#e3e3e3] border-b-[#e3e3e3] border-l-[#808080] bg-white outline-none"
        />
        <label className="mt-[3px] ml-[4px] flex h-[15px] shrink-0 items-center gap-[5px]"><Tick id="shown" />Показывать в наименовании</label>
        <div role="tablist" className={`mt-[7px] flex h-[24px] shrink-0 items-start border-t-2 border-[#808080] ${DITHER}`}>
          <button role="tab" className="relative ml-[8px] h-[16px] w-[74px] whitespace-nowrap">
            <svg width="74" height="16" viewBox="0 0 74 16" className="absolute inset-0" aria-hidden="true">
              <path d="M.5 -1L5 14.500h63.500L73.500 -1z" fill="#f0f0f0" stroke="#555" />
            </svg>
            <span className="relative">Примечание</span>
          </button>
          <button role="tab" className="relative h-[16px] w-[60px] whitespace-nowrap">
            <svg width="60" height="16" viewBox="0 0 60 16" className="absolute inset-0" aria-hidden="true">
              <path d="M-1 6L1.500 14.500h53L59.500 -1H1z" fill="#fff" stroke="#555" />
            </svg>
            <span className="relative">Поправка</span>
          </button>
        </div>
        <label className="mt-[3px] ml-[8px] flex h-[15px] shrink-0 items-center gap-[6px]"><Tick id="replace" />Заменять назначенные</label>
        <div className="mt-[4px] mb-[7px] flex h-[26px] shrink-0 gap-[6px] px-[7px]">
          <PushBtn off className="flex-1">Применить</PushBtn>
          <PushBtn off className="flex-1">Отменить</PushBtn>
        </div>
      </div>
    </section>
  );
}

/* ---------- bottom ---------- */

function BottomPanel() {
  return (
    <section className="flex min-h-0 grow basis-[303px] border-t border-[#a0a0a0] shadow-[inset_0_1px_0_#fff]">
      <div className="flex w-[14px] shrink-0 flex-col pt-[4px] pl-[2px]">
        <CloseX label="Закрыть нижнюю панель" />
        <div className="mt-[2px] ml-[3px] flex flex-1 gap-[1px]">
          <span className="w-[2px] border-r border-l border-r-[#a0a0a0] border-l-white" />
          <span className="w-[2px] border-r border-l border-r-[#a0a0a0] border-l-white" />
        </div>
      </div>
      <div className="flex min-w-0 flex-1 flex-col pt-[3px]">
        <div role="tablist" className="flex h-[20px] shrink-0 items-end pl-[2px]">
          <button role="tab" className="h-[18px] w-[103px] border-t border-r-2 border-l border-t-white border-r-[#808080] border-l-white whitespace-nowrap">Сметные ресурсы</button>
          <button role="tab" className="ml-[1px] h-[18px] w-[103px] border-t border-l border-white whitespace-nowrap">Сметные индексы</button>
          <button role="tab" className="h-[20px] w-[83px] border-t border-r-2 border-l border-t-white border-r-[#808080] border-l-white pb-[2px] whitespace-nowrap">Состав работ</button>
        </div>
        <div className="flex min-h-0 flex-1 border-t border-r-2 border-b-2 border-l border-t-white border-r-[#808080] border-b-[#808080] border-l-white pt-[3px] pr-[2px] pb-[2px] pl-[2px]">
          <div className="flex-1 border-t border-l border-[#808080] bg-white" />
        </div>
      </div>
    </section>
  );
}

function StatusBar() {
  return (
    <footer className={`mt-[2px] flex h-[25px] shrink-0 items-stretch ${SEGOE} text-[11px] leading-[24px]`}>
      <span className="ml-[89px] w-[301px] border-t border-l border-[#a0a0a0]" />
      <span className="ml-[1px] min-w-0 flex-1 border-t border-l border-[#a0a0a0] pl-[2px] whitespace-nowrap">
        Всего с НР и СП по смете: Уровень цен: 4 411 984,94 руб.
      </span>
      <span className="ml-[1px] w-[16px] overflow-hidden border-t border-l border-[#a0a0a0] pl-[1px]">EN</span>
      <svg width="17" height="24" viewBox="0 0 17 24" aria-hidden="true">
        <path d="M3 24L17 10M8 24l9-9M13 24l4-4" stroke="#a0a0a0" strokeWidth="2" />
      </svg>
    </footer>
  );
}

const TaskIcons = {
  outlook: (
    <Svg s={31} vb="0 0 31 31">
      <path d="M2 1h27v29H2z" fill="#f7b52c" />
      <path d="M15 3h12v10H15z" fill="#fff" />
      <circle cx="10" cy="12" r="5.500" stroke="#fff" strokeWidth="3.500" fill="#e58a0b" />
      <circle cx="23" cy="13" r="5" fill="#fff" stroke="#d5a13a" />
      <path d="M23 10v3h3" stroke="#b5761d" />
      <path d="M6 19h22v10H6z" fill="#fff3cf" />
      <path d="M6 19l11 7 11-7" stroke="#d2961f" />
    </Svg>
  ),
  chrome: (
    <Svg s={31} vb="0 0 31 31">
      <circle cx="15.500" cy="15.500" r="14" fill="#fbc116" />
      <path d="M3.400 8.500A14 14 0 0127.600 8.500H15.500A7 7 0 009 18z" fill="#de4438" />
      <path d="M3.400 8.500A14 14 0 0014 29.400l5.500-8.200A7 7 0 019.400 19z" fill="#1aa260" />
      <circle cx="15.500" cy="15.500" r="6.600" fill="#fff" />
      <circle cx="15.500" cy="15.500" r="5.200" fill="#4587f3" />
    </Svg>
  ),
  folder: (
    <Svg s={31} vb="0 0 31 31">
      <path d="M6 1h10v27H6z" fill="#e9cf72" />
      <path d="M8 3h12v24H8z" fill="#fff8d6" />
      <path d="M6 1l8 4v25l-8-3z" fill="#f7e38f" />
      <path d="M14 5l8-3v24l-8 3.500z" fill="#e3c462" />
    </Svg>
  ),
  ie: (
    <Svg s={31} vb="0 0 31 31">
      <path d="M27 20c-2 5-6 8-11 8-7 0-12-5-12-12S9 4 16 4c7 0 12 5 12 13.500H11.500c.5 3 2 5 5 5 2 0 3.500-1 4.500-2.500zM11.500 13.500h9.500c-.3-3-2-4.500-4.700-4.500s-4.300 1.500-4.800 4.500z" fill="#36b3f0" stroke="#1478bd" strokeWidth=".6" />
      <path d="M3 28C-1 22 9 8 21 3c5-2 8-1 7 4 0-3-3-3-7-1C12 10 3 20 5 26c1 2 4 2 6 1-3 3-6 3.500-8 1z" fill="#f5c02f" />
    </Svg>
  ),
  smeta: <Logo s={31} />,
  calc: (
    <Svg s={31} vb="0 0 31 31">
      <rect x="4" y="1" width="22" height="29" rx="1.500" fill="#6fa9dc" stroke="#b9dcf6" />
      <path d="M7 3h16v8H7z" fill="#eef8ff" />
      <path d="M7 3h16v2H7z" fill="#f29b2c" />
      <text x="19" y="10.500" fontSize="6" fill="#234" fontFamily="Liberation Sans">0</text>
      <path d="M7 15h13M7 19h13M7 23h13M7 27h13" stroke="#f4fbff" strokeWidth="2.500" strokeDasharray="2.500 1" />
      <path d="M21 22h3v6h-3z" fill="#f2a02c" />
    </Svg>
  ),
};
const tasks = [
  ["outlook", "Inbox - n.torlopo..."],
  ["chrome", "Просмотр темы..."],
  ["folder", "Новая папка"],
  ["ie", "Добро пожалов..."],
  ["smeta", "Smeta.RU  9.0.2.1"],
  ["calc", "Калькулятор"],
];

function Taskbar() {
  return (
    <div className={`flex h-[40px] shrink-0 items-center border-t border-[#4a545c] bg-linear-to-b from-[#11191e] to-[#060a0d] text-[11px] text-white ${SEGOE}`}>
      <button aria-label="Пуск" className="ml-[8px] shrink-0">
        <svg width="38" height="38" viewBox="0 0 38 38" aria-hidden="true">
          <defs>
            <radialGradient id="orb" cx=".5" cy=".9" r=".9">
              <stop offset="0" stopColor="#39e0ff" />
              <stop offset=".45" stopColor="#1c6fae" />
              <stop offset="1" stopColor="#1b3f66" />
            </radialGradient>
          </defs>
          <circle cx="19" cy="19" r="18" fill="url(#orb)" stroke="#86a5b8" />
          <path d="M4 14a16 16 0 0130 0c-9-4-21-4-30 0z" fill="#fff" opacity=".35" />
          <path d="M11 11c3-1.500 5-1.500 8 0l-1.500 8c-3-1.500-5-1.500-8 0z" fill="#ee5a24" />
          <path d="M20.500 11.500c3 1.500 5 1.500 8 0L27 19.500c-3 1.500-5 1.500-8 0z" fill="#8cc63f" />
          <path d="M9 20.500c3-1.500 5-1.500 8 0L15.500 28c-3-1.500-5-1.500-8 0z" fill="#3fa9f5" />
          <path d="M18.500 21c3 1.500 5 1.500 8 0L25 28.500c-3 1.500-5 1.500-8 0z" fill="#fdc72f" />
        </svg>
      </button>
      <button aria-label="Удалённый рабочий стол" className="mr-[16px] ml-[27px] shrink-0">
        <svg width="33" height="32" viewBox="0 0 33 32" aria-hidden="true">
          <path d="M2 2l26 1-2 19-20-1z" fill="#dfe6ee" />
          <path d="M4 4l22 1-2 15-17-1z" fill="#1a2fc0" />
          <path d="M16 4.500L26 5l-2 15z" fill="#5e7bf0" />
          <path d="M12 22h7l1 5H10z" fill="#b9c2cc" />
          <ellipse cx="14" cy="28.500" rx="8" ry="2.500" fill="#cfd6dd" />
          <circle cx="25" cy="25" r="6.500" fill="#e9efe6" stroke="#9aa" />
          <path d="M21.500 22.500l3 2.500-3 3M28.500 21.500l-3 2.500 3 3" stroke="#3a9a2c" strokeWidth="1.500" fill="none" />
        </svg>
      </button>
      <div className="flex min-w-0 gap-[4px]">
        {tasks.map(([icon, name]) => (
          <button
            key={icon}
            className={`flex h-[37px] w-[152px] min-w-0 items-center gap-[6px] rounded-[3px] border pl-[7px] whitespace-pre ${
              icon === "smeta"
                ? "border-[#b8bcc0] bg-[linear-gradient(165deg,#b9babb_0_40%,#8b8d8f_42%,#77797b)]"
                : "border-[#6b7175] bg-[linear-gradient(170deg,#85898c,#4a4e51_45%,#1c2124_48%,#22272a)]"
            }`}
          >
            {TaskIcons[icon]}
            <span className="overflow-hidden">{name}</span>
          </button>
        ))}
      </div>
      <div className="ml-auto flex h-full shrink-0 items-center">
        <span className="mr-[16px] pb-[6px]">RU</span>
        <Tri d="up" c="#fff" />
        <svg width="16" height="14" viewBox="0 0 16 14" className="ml-[13px]" fill="none" aria-hidden="true">
          <path d="M0 0h16v14H0z" fill="#dcdcdc" />
          <path d="M1 4h11l2 1.500v3H1z" fill="#fff" stroke="#333" />
          <path d="M3 6h7" stroke="#333" />
          <path d="M3 12h11" stroke="#d62020" strokeWidth="2" />
        </svg>
        <svg width="16" height="16" viewBox="0 0 16 16" className="ml-[8px]" aria-hidden="true">
          <path d="M1 5h3l4-4v14l-4-4H1z" fill="#eee" />
          <circle cx="11" cy="11" r="4.500" fill="#d92626" />
          <path d="M9 9l4 4M13 9l-4 4" stroke="#fff" strokeWidth="1.500" />
        </svg>
        <svg width="16" height="16" viewBox="0 0 16 16" className="ml-[8px]" fill="none" aria-hidden="true">
          <path d="M5.500 4.500h9v7h-9zM7 14.500h7M10 12v2M2.500 5v8H6M1 1v3h3.500V1" stroke="#fff" strokeWidth="1.200" />
        </svg>
        <div className="ml-[17px] w-[56px] text-center leading-[17px]">15:53<br />09.06.2016</div>
        <button aria-label="Показать рабочий стол" className="ml-[11px] h-full w-[14px] border border-[#4c5358] bg-linear-to-r from-[#3a4146] to-[#0c1114]" />
      </div>
    </div>
  );
}

export default function App() {
  return (
    <div className={`flex h-screen min-h-[760px] flex-col overflow-hidden bg-[#f0f0f0] text-[11px] leading-[13px] text-black ${SANS}`}>
      <TitleBar />
      <MenuBar />
      <IconToolbar />
      <TextToolbar />
      <div className="flex h-[19px] shrink-0 border-b border-[#a0a0a0] bg-white">
        <input aria-label="Ячейка" defaultValue="ЛС1.Р2" className="h-[17px] w-[101px] shrink-0 bg-white pl-[2px] outline-none" />
        <span className="h-[17px] w-[68px] bg-[#f0f0f0]" />
        <span className="flex-1 border-r border-[#a0a0a0]" />
        <span className="ml-[3px] flex w-[16px] flex-col items-center justify-between bg-[#f0f0f0] pt-[3px]">
          <Tri d="up" c="#777" />
          <Tri c="#777" />
        </span>
      </div>
      <main className="flex min-h-0 grow basis-[535px]">
        <LeftPanel />
        <CenterPanel />
        <RightPanel />
      </main>
      <BottomPanel />
      <StatusBar />
      <Taskbar />
    </div>
  );
}
